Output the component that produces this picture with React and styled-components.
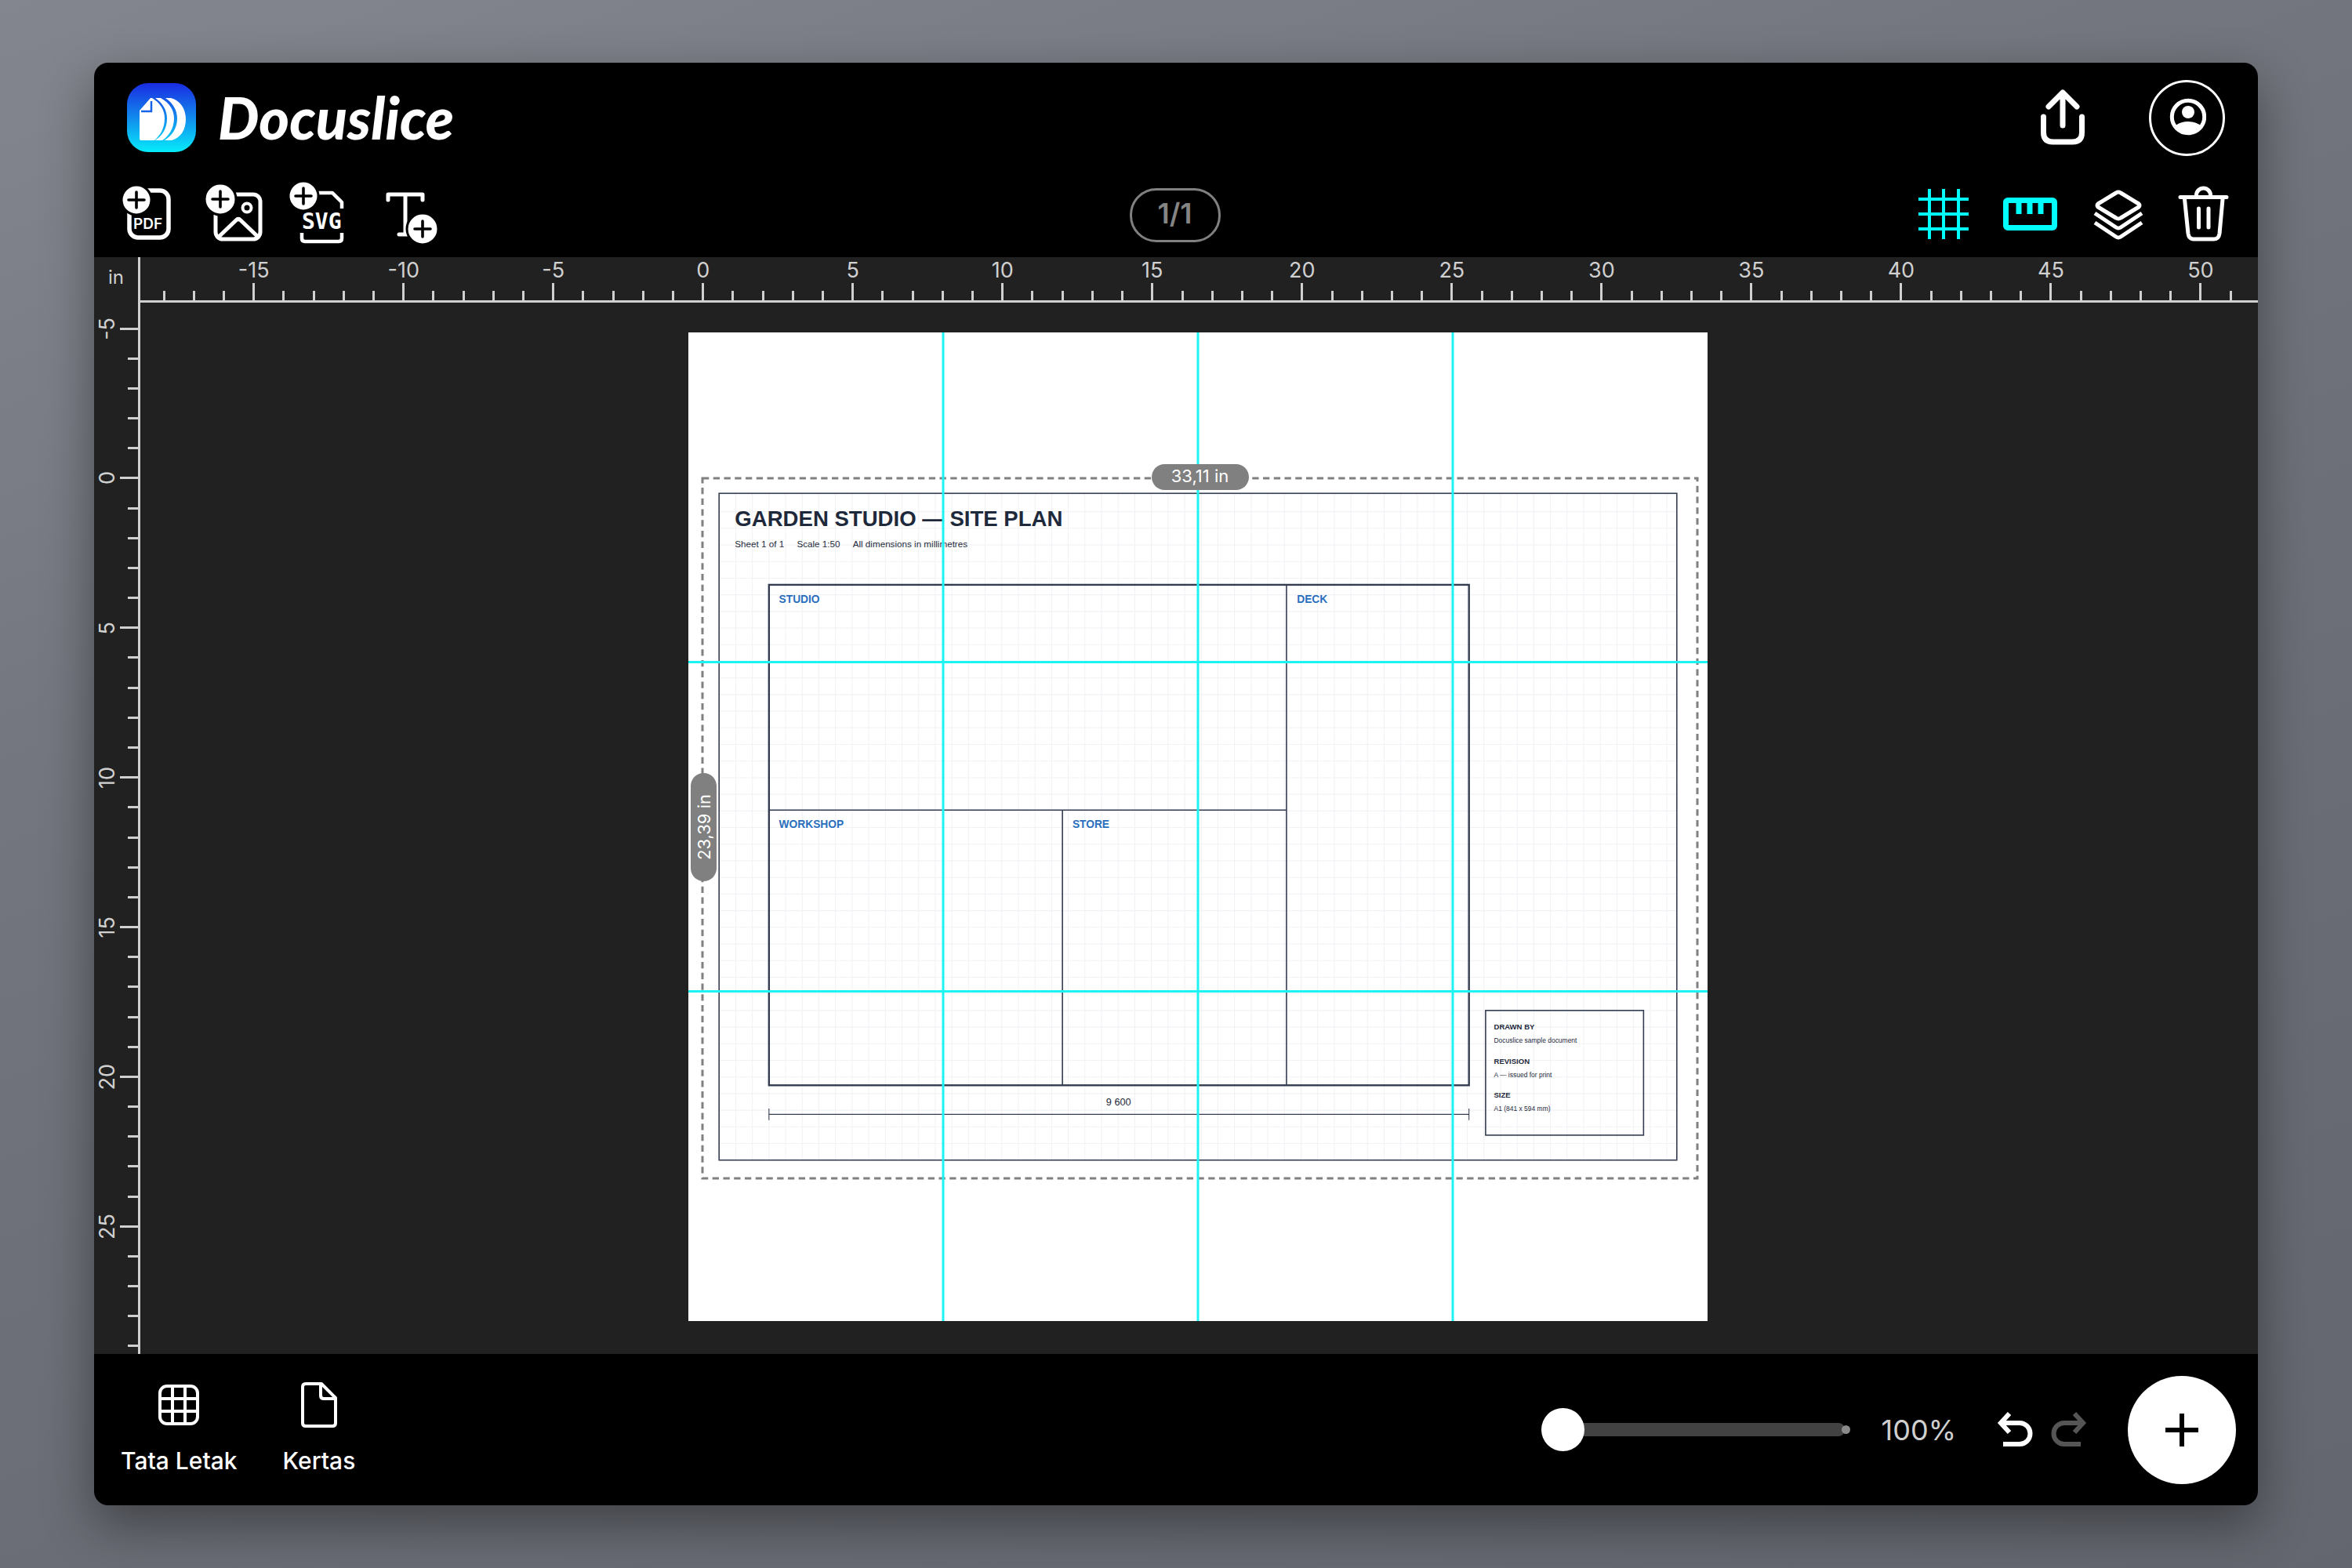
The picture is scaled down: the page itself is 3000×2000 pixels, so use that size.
import React, { useState } from 'react';
import styled, { createGlobalStyle, css } from 'styled-components';

const GlobalStyle = createGlobalStyle`
  * {
    box-sizing: border-box;
  }
  body {
    margin: 0;
    min-height: 100vh;
    background: linear-gradient(160deg, #83868e 0%, #72757d 35%, #6a6d75 65%, #63666e 100%);
    font-family: Inter, sans-serif;
    color: #fff;
  }
  button {
    border: 0;
    padding: 0;
    background: none;
    color: inherit;
    font: inherit;
    cursor: pointer;
  }
  svg {
    display: block;
  }
`

const AppWindow = styled.div`
  display: flex;
  flex-direction: column;
  height: calc(100vh - 160px);
  margin: 80px 120px;
  border-radius: 18px;
  overflow: hidden;
  background: #000;
  box-shadow: 0 24px 64px rgba(0, 0, 0, 0.4);
`

const Backdrop = styled.div`
  display: flow-root;
`

const TopBar = styled.header`
  display: flex;
  align-items: center;
  justify-content: space-between;
  height: 140px;
  padding: 0 42px;
`

const Brand = styled.a`
  display: flex;
  align-items: center;
  gap: 28px;
  color: #fff;
  text-decoration: none;
`

const Wordmark = styled.span`
  font-family: Lato, sans-serif;
  font-size: 74px;
  font-style: italic;
  font-weight: 900;
  line-height: 80px;
`

const Account = styled.div`
  display: flex;
  align-items: center;
  gap: 82px;
`

const AvatarButton = styled.button`
  display: flex;
  align-items: center;
  justify-content: center;
  width: 97px;
  height: 97px;
  border: 3px solid #fff;
  border-radius: 50%;
`

const Toolbar = styled.div`
  display: grid;
  grid-template-columns: 1fr auto 1fr;
  align-items: center;
  height: 108px;
  padding: 0 15px 0 12px;
`

const ToolGroup = styled.div`
  display: flex;
  justify-content: ${props => (props.$end ? 'flex-end' : 'flex-start')};
`

const ToolButton = styled.button`
  color: ${props => (props.$active ? '#00ffff' : '#fff')};
`

const PageBadge = styled.div`
  display: flex;
  align-items: center;
  justify-content: center;
  width: 116px;
  height: 69px;
  border: 3px solid #808080;
  border-radius: 34px;
  padding-bottom: 4px;
  color: #858585;
  font-size: 36px;
  font-weight: 600;
`

const Workspace = styled.main`
  flex: 1;
  display: grid;
  grid-template-columns: 59px 1fr;
  grid-template-rows: 58px minmax(0, 1fr);
  min-height: 0;
  overflow: hidden;
  background: #212121;
  color: #d0d0d0;
`

const Unit = styled.div`
  display: flex;
  align-items: center;
  justify-content: center;
  border-right: 3px solid #d0d0d0;
  padding-bottom: 8px;
  font-size: 24px;
`

const Ruler = styled.div`
  display: flex;
  ${props => props.$vertical ? css`
    flex-direction: column;
    margin-bottom: -9px;
    border-right: 3px solid #d0d0d0;
    padding-top: 14px;
  ` : css`
    border-bottom: 3px solid #d0d0d0;
    padding: 0 16px 0 11px;
  `}
`

const Mark = styled.div`
  flex: 1 1 0;
  display: flex;
  flex-direction: ${props => (props.$vertical ? 'row' : 'column')};
  align-items: center;
  justify-content: flex-end;
  gap: 3px;
  min-width: 0;
  min-height: 0;

  &::after {
    content: '';
    flex: none;
    width: ${props => (props.$vertical ? (props.$major ? 23 : 13) : 3)}px;
    height: ${props => (props.$vertical ? 3 : (props.$major ? 22 : 12))}px;
    background: #d0d0d0;
  }
`

const MarkLabel = styled.span`
  font-size: 27px;
  line-height: 26px;
  white-space: nowrap;
  ${props => props.$vertical && css`
    writing-mode: vertical-rl;
    transform: rotate(180deg);
  `}
`

const Canvas = styled.div`
  display: flex;
  align-items: center;
  justify-content: center;
  padding: 0 4px 4px 0;
`

const Sheet = styled.div`
  position: relative;
  width: 1300px;
  background: #fff;
`

const SizeTag = styled.div`
  position: absolute;
  display: flex;
  align-items: center;
  justify-content: center;
  border-radius: 17px;
  background: #808080;
  color: #fff;
  font-size: 22px;
  line-height: 30px;
  ${props => props.$vertical ? css`
    left: 3px;
    top: 50%;
    width: 33px;
    height: 138px;
    writing-mode: vertical-rl;
    transform: translateY(-50%) rotate(180deg);
  ` : css`
    left: calc(50% + 3px);
    top: 168px;
    width: 124px;
    height: 33px;
    padding-bottom: 3px;
    transform: translateX(-50%);
  `}
`

const BottomBar = styled.footer`
  display: flex;
  align-items: center;
  justify-content: space-between;
  height: 193px;
  padding: 0 28px 0 34px;
`

const Tabs = styled.nav`
  display: flex;
  gap: 58px;
`

const TabButton = styled.button`
  display: flex;
  flex-direction: column;
  align-items: center;
  gap: 24px;
  padding-bottom: 4px;
  font-size: 30px;
  font-weight: 500;
  line-height: 36px;
`

const Controls = styled.div`
  display: flex;
  align-items: center;
  gap: 52px;
`

const Zoom = styled.div`
  display: flex;
  align-items: center;
  gap: 40px;
`

const SliderBox = styled.label`
  position: relative;
  display: flex;
  align-items: center;
  width: 394px;

  &::after {
    content: '';
    position: absolute;
    right: 0;
    width: 11px;
    height: 11px;
    border-radius: 50%;
    background: #8a8a8a;
  }
`

const Slider = styled.input`
  appearance: none;
  width: 387px;
  height: 55px;
  margin: 0;
  background: none;

  &::-webkit-slider-runnable-track {
    height: 17px;
    border-radius: 0 8px 8px 0;
    background: linear-gradient(to right, transparent 27px, #424242 27px);
  }
  &::-webkit-slider-thumb {
    appearance: none;
    width: 55px;
    height: 55px;
    margin-top: -19px;
    border-radius: 50%;
    background: #fff;
  }
`

const ZoomValue = styled.output`
  color: #d0d0d0;
  font-size: 36px;
`

const History = styled.div`
  display: flex;
  gap: 23px;
`

const HistoryButton = styled.button`
  color: #fff;

  &:disabled {
    color: #555;
  }
`

const AddButton = styled.button`
  display: flex;
  align-items: center;
  justify-content: center;
  width: 138px;
  height: 138px;
  border-radius: 50%;
  background: #fff;
  color: #000;
`

const range = (from, to, step = 1) => {
  const list = [];
  for (let n = from; n <= to; n += step) list.push(n);
  return list;
}

const Logo = () => (
  <svg width="88" height="88" viewBox="0 0 88 88">
    <defs>
      <linearGradient id="logo" x1="0" y1="0" x2="0" y2="1">
        <stop offset="0" stopColor="#1a2be2" />
        <stop offset="0.5" stopColor="#118aec" />
        <stop offset="1" stopColor="#06ecfb" />
      </linearGradient>
    </defs>
    <rect width="88" height="88" rx="27" fill="url(#logo)" />
    <g fill="#fff">
      <path d="M16 35 L30 19 H32 C42 25 48 34 48 45 C48 57 43 66 35 73 H18 Q16 73 16 71 Z" />
      <path d="M36 19 H43 C54 25 60 34 60 45 C60 58 53 68 45 73 H36 C45 67 51 58 51 45 C51 34 45 25 36 19 Z" />
      <path d="M49 19 H56 C68 22 75 33 75 46 C75 60 68 70 57 73 H48 C57 67 64 58 64 45 C64 34 58 25 49 19 Z" />
    </g>
    <path d="M31 23 V36 H18" fill="none" stroke="#1763e8" strokeWidth="2.5" />
  </svg>
)

const ShareIcon = () => (
  <svg width="56" height="72" viewBox="0 0 56 72" fill="none" stroke="#fff" strokeWidth="7" strokeLinecap="round" strokeLinejoin="round">
    <path d="M28 46 V5 M10 22 L28 4 L46 22" />
    <path d="M3.5 35 V55 Q3.5 67 15.5 67 H40.5 Q52.5 67 52.5 55 V35" />
  </svg>
)

const UserIcon = () => (
  <svg width="48" height="50" viewBox="0 0 48 50">
    <circle cx="25" cy="24" r="20.7" fill="none" stroke="#fff" strokeWidth="5" />
    <circle cx="25" cy="18" r="8" fill="#fff" />
    <path d="M9 35 Q16 30 25 30 Q34 30 41 35 Q35 45 25 45 Q15 45 9 35 Z" fill="#fff" />
  </svg>
)

// white disc with a plus, cut out of the icon beneath by a black ring
const PlusDot = ({ x, y, r }) => (
  <g>
    <circle cx={x} cy={y} r={r + 2} fill="#fff" stroke="#000" strokeWidth="3" />
    <path d={`M${x - 10} ${y} H${x + 10} M${x} ${y - 10} V${y + 10}`} stroke="#000" strokeWidth="3.6" strokeLinecap="round" />
  </g>
)

const ToolIcon = ({ width = 112, children, ...rest }) => (
  <svg width={width} height="84" viewBox={`0 2 ${width} 84`} fill="none" stroke="currentColor" strokeWidth="5" strokeLinejoin="round" {...rest}>
    {children}
  </svg>
)

const PdfIcon = () => (
  <ToolIcon>
    <rect x="33" y="13" width="50" height="60" rx="11" strokeWidth="5.5" />
    <text x="38" y="62" fill="#fff" stroke="none" fontFamily="Inter, sans-serif" fontSize="19" fontWeight="600">PDF</text>
    <PlusDot x={42} y={25} r={17} />
  </ToolIcon>
)

const ImageIcon = () => (
  <ToolIcon>
    <rect x="31" y="18" width="57" height="57" rx="9" />
    <circle cx="71" cy="35" r="5.5" strokeWidth="4" />
    <path d="M34 73 L57 51 Q60 48 63 51 L86 73" />
    <PlusDot x={37} y={24} r={18} />
  </ToolIcon>
)

const SvgIcon = () => (
  <ToolIcon strokeWidth="4.5">
    <path d="M50 16 H68 L80 28 V36" />
    <path d="M29 67 V74 Q29 78 33 78 H76 Q80 78 80 74 V67" />
    <text x="29" y="62" fill="#fff" stroke="none" fontFamily="'DejaVu Sans Mono', monospace" fontSize="28" fontWeight="700">SVG</text>
    <PlusDot x={31} y={20} r={17} />
  </ToolIcon>
)

const TextIcon = () => (
  <ToolIcon strokeLinecap="round">
    <path d="M27 25 V18 H71 V25 M49 18 V69 M41 69 H60" />
    <PlusDot x={71} y={62} r={18} />
  </ToolIcon>
)

const GridIcon = () => (
  <ToolIcon width={110} strokeWidth="4">
    <path d="M36 11 V75 M54 11 V75 M73 11 V75 M22 24 H86 M22 43 H86 M22 62 H86" />
  </ToolIcon>
)

const RulerIcon = () => (
  <ToolIcon width={110} strokeWidth="7">
    <rect x="23.5" y="25.5" width="62" height="35" rx="2.5" />
    <path d="M40 26 V43 M54 26 V43 M68 26 V43" />
  </ToolIcon>
)

const LayersIcon = () => (
  <ToolIcon width={110}>
    <path d="M54 16 Q57 14 60 16 L83 30 Q85 32 83 34 L60 48 Q57 50 54 48 L31 34 Q29 32 31 30 Z" />
    <path d="M27 42 L54 60 Q57 62 60 60 L87 42 M27 54 L54 72 Q57 74 60 72 L87 54" />
  </ToolIcon>
)

const TrashIcon = () => (
  <ToolIcon width={110} strokeLinecap="round">
    <path d="M26 21.5 H85 M46.5 21 V19 A9 9 0 0 1 64.5 19 V21" />
    <path d="M31.5 24 L36 68 Q37 75 43 75 H69 Q75 75 76 68 L80 24" />
    <path d="M49.5 36 V60 M62 36 V60" />
  </ToolIcon>
)

const LayoutIcon = () => (
  <svg width="52" height="58" viewBox="0 0 52 58" fill="none" stroke="currentColor" strokeWidth="4">
    <rect x="2" y="5" width="48" height="48" rx="9" />
    <path d="M18 5 V53 M34 5 V53 M2 21 H50 M2 37 H50" />
  </svg>
)

const PaperIcon = () => (
  <svg width="46" height="58" viewBox="0 0 46 58" fill="none" stroke="currentColor" strokeWidth="4" strokeLinejoin="round">
    <path d="M6 2 H26 L44 20 V52 Q44 56 40 56 H6 Q2 56 2 52 V6 Q2 2 6 2 Z" />
    <path d="M25 3 V17 Q25 21 29 21 H43" />
  </svg>
)

const UndoIcon = ({ flip }) => (
  <svg width="46" height="46" viewBox="0 0 46 46" fill="none" stroke="currentColor" strokeWidth="6">
    <g transform={flip ? 'translate(46 0) scale(-1 1)' : undefined}>
      <path d="M16 2 L5 14 L16 26" />
      <path d="M5 14 H29 A13.5 13.5 0 0 1 29 41 H8" />
    </g>
  </svg>
)

const rooms = [
  { name: 'STUDIO', x: 184, y: 304 },
  { name: 'DECK', x: 1430, y: 304 },
  { name: 'WORKSHOP', x: 184, y: 845 },
  { name: 'STORE', x: 890, y: 845 },
];

const titleBlock = [
  { label: 'DRAWN BY', value: 'Docuslice sample document' },
  { label: 'REVISION', value: 'A — issued for print' },
  { label: 'SIZE', value: 'A1 (841 x 594 mm)' },
];

// A1 page, drawn in points
const SitePlan = () => (
  <svg x="18" y="184" width="1264" height="893" viewBox="0 0 2384 1684" fontFamily="'Liberation Sans', Arial, sans-serif" fill="#1e293b">
    <g stroke="#f0f2f5" strokeWidth="2">
      {range(80, 2320, 40).map(x => <path key={x} d={`M${x} 40 V1644`} />)}
      {range(84, 1604, 40).map(y => <path key={y} d={`M40 ${y} H2344`} />)}
    </g>
    <g fill="none" stroke="#333c50">
      <rect x="40" y="40" width="2304" height="1604" strokeWidth="3" />
      <rect x="160" y="260" width="1684" height="1204" strokeWidth="4.5" />
      <path d="M160 802 H1405 M1405 260 V1464 M866 802 V1464" strokeWidth="3" />
      <path d="M160 1534 H1844 M160 1520 V1548 M1844 1520 V1548" strokeWidth="2" />
      <rect x="1884" y="1284" width="380" height="300" strokeWidth="3" />
    </g>
    <text x="78" y="118" fontSize="52" fontWeight="700">GARDEN STUDIO — SITE PLAN</text>
    <text x="78" y="169" fontSize="22">
      {'Sheet 1 of 1\u00a0\u00a0\u00a0\u00a0\u00a0Scale 1:50\u00a0\u00a0\u00a0\u00a0\u00a0All dimensions in millimetres'}
    </text>
    <g fontSize="26" fontWeight="700" fill="#2a6fbd">
      {rooms.map(room => <text key={room.name} x={room.x} y={room.y}>{room.name}</text>)}
    </g>
    <text x="1001" y="1512" fontSize="24" textAnchor="middle">9 600</text>
    {titleBlock.map((row, i) => (
      <g key={row.label}>
        <text x="1904" y={1330 + i * 82} fontSize="18" fontWeight="700">{row.label}</text>
        <text x="1904" y={1362 + i * 82} fontSize="16">{row.value}</text>
      </g>
    ))}
  </svg>
)

const marks = (from, to, vertical) => range(from, to).map(n => (
  <Mark key={n} $vertical={vertical} $major={n % 5 === 0}>
    {n % 5 === 0 && <MarkLabel $vertical={vertical}>{n}</MarkLabel>}
  </Mark>
))

const App = () => {
  const [zoom, setZoom] = useState(100);

  return (
    <Backdrop>
      <GlobalStyle />
      <AppWindow>
        <TopBar>
          <Brand href="#">
            <Logo />
            <Wordmark>Docuslice</Wordmark>
          </Brand>
          <Account>
            <button aria-label="Share"><ShareIcon /></button>
            <AvatarButton aria-label="Account"><UserIcon /></AvatarButton>
          </Account>
        </TopBar>

        <Toolbar>
          <ToolGroup>
            <ToolButton aria-label="PDF"><PdfIcon /></ToolButton>
            <ToolButton aria-label="Image"><ImageIcon /></ToolButton>
            <ToolButton aria-label="SVG"><SvgIcon /></ToolButton>
            <ToolButton aria-label="Text"><TextIcon /></ToolButton>
          </ToolGroup>
          <PageBadge>1/1</PageBadge>
          <ToolGroup $end>
            <ToolButton $active aria-label="Grid"><GridIcon /></ToolButton>
            <ToolButton $active aria-label="Ruler"><RulerIcon /></ToolButton>
            <ToolButton aria-label="Layers"><LayersIcon /></ToolButton>
            <ToolButton aria-label="Delete"><TrashIcon /></ToolButton>
          </ToolGroup>
        </Toolbar>

        <Workspace>
          <Unit>in</Unit>
          <Ruler>{marks(-18, 51, false)}</Ruler>
          <Ruler $vertical>{marks(-5, 29, true)}</Ruler>
          <Canvas>
            <Sheet>
              <svg width="100%" viewBox="0 0 1300 1261">
                <SitePlan />
                <rect x="18" y="186" width="1269" height="893" fill="none" stroke="#808080" strokeWidth="3" strokeDasharray="8.3 5.45" />
                <path d="M325 0 V1261 M650 0 V1261 M975 0 V1261 M0 420.5 H1300 M0 840.5 H1300" stroke="#1cf4f4" strokeWidth="3" />
              </svg>
              <SizeTag>33,11 in</SizeTag>
              <SizeTag $vertical>23,39 in</SizeTag>
            </Sheet>
          </Canvas>
        </Workspace>

        <BottomBar>
          <Tabs>
            <TabButton><LayoutIcon />Tata Letak</TabButton>
            <TabButton><PaperIcon />Kertas</TabButton>
          </Tabs>
          <Controls>
            <Zoom>
              <SliderBox>
                <Slider
                  type="range"
                  min="100"
                  max="400"
                  value={zoom}
                  aria-label="Zoom"
                  onChange={e => setZoom(Number(e.target.value))}
                />
              </SliderBox>
              <ZoomValue>{zoom}%</ZoomValue>
            </Zoom>
            <History>
              <HistoryButton aria-label="Undo"><UndoIcon /></HistoryButton>
              <HistoryButton disabled aria-label="Redo"><UndoIcon flip /></HistoryButton>
            </History>
            <AddButton aria-label="Add">
              <svg width="42" height="42" viewBox="0 0 42 42" stroke="currentColor" strokeWidth="6">
                <path d="M21 0 V42 M0 21 H42" />
              </svg>
            </AddButton>
          </Controls>
        </BottomBar>
      </AppWindow>
    </Backdrop>
  );
}

export default App;
